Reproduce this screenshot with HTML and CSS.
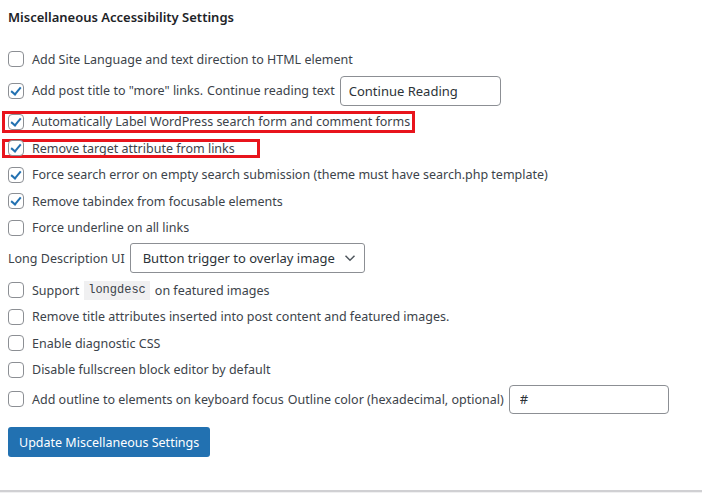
FILE: index.html
```html
<!DOCTYPE html>
<html lang="en">
<head>
  <meta charset="UTF-8">
  <title>Miscellaneous Accessibility Settings</title>
  <link rel="stylesheet" href="styles.css">
</head>
<body>

  <form class="ajuste">
    <h3>Miscellaneous Accessibility Settings</h3>

    <ul>
      <li><label><input type="checkbox"> Add Site Language and text direction to HTML element</label></li>
      <li class="con-campo"><label><input type="checkbox" checked> Add post title to "more" links.</label><label class="sigue">Continue reading text <input type="text" class="campo" value="Continue Reading"></label></li>
      <li><label class="marcado marcado-1"><input type="checkbox" checked> Automatically Label WordPress search form and comment forms</label></li>
      <li><label class="marcado marcado-2"><input type="checkbox" checked> Remove target attribute from links</label></li>
      <li><label><input type="checkbox" checked> Force search error on empty search submission (theme must have search.php template)</label></li>
      <li><label><input type="checkbox" checked> Remove tabindex from focusable elements</label></li>
      <li><label><input type="checkbox"> Force underline on all links</label></li>
      <li class="con-campo con-selector"><label>Long Description UI
        <span class="selector">Button trigger to overlay image
          <svg width="12" height="8" viewBox="0 0 12 8"><path d="M1.5 1.8 6 6.2 10.5 1.8" fill="none" stroke="#50575e" stroke-width="1.5"/></svg>
        </span></label></li>
      <li><label><input type="checkbox"> Support <code>longdesc</code> on featured images</label></li>
      <li><label><input type="checkbox"> Remove title attributes inserted into post content and featured images.</label></li>
      <li><label><input type="checkbox"> Enable diagnostic CSS</label></li>
      <li><label><input type="checkbox"> Disable fullscreen block editor by default</label></li>
      <li class="con-campo ultimo"><label><input type="checkbox"> Add outline to elements on keyboard focus</label><label class="sigue">Outline color (hexadecimal, optional) <input type="text" class="campo campo-color" value="#"></label></li>
    </ul>

    <button type="button">Update Miscellaneous Settings</button>
  </form>

  <hr>
</body>
</html>
```

FILE: styles.css
```css
body {
  font-family: "Noto Sans", "Open Sans", sans-serif;
  font-size: 12.5px;
  margin: 0;
  background-color: #fff;
  color: #3c434a;
}

.ajuste {
  padding: 0 8px;
}

h3 {
  margin: 0;
  padding-top: 8px;
  height: 38px;
  font-size: 13px;
  font-weight: 600;
  color: #1d2327;
}

ul {
  list-style: none;
  margin: 0;
  padding: 0;
}

ul li {
  display: flex;
  align-items: center;
  height: 26.5px;
  white-space: nowrap;
}

ul li.con-campo {
  height: 36px;
}

ul li.con-selector {
  height: 34px;
  margin-bottom: 2px;
}

ul li.ultimo {
  height: 32px;
}

label {
  display: inline-flex;
  align-items: center;
}

.sigue {
  margin-left: 4px;
}

input[type="checkbox"] {
  appearance: none;
  width: 16px;
  height: 16px;
  margin: 0 8px 0 0;
  border: 1px solid #8c8f94;
  border-radius: 4px;
  background: #fff;
  position: relative;
  flex: none;
}

input[type="checkbox"]:checked::before {
  content: "";
  position: absolute;
  left: 4px;
  top: 1px;
  width: 4px;
  height: 8px;
  border: solid #2271b1;
  border-width: 0 2.2px 2.2px 0;
  transform: rotate(40deg);
}

.campo {
  font: inherit;
  font-size: 13px;
  color: #2c3338;
  height: 30px;
  box-sizing: border-box;
  width: 161px;
  margin-left: 5px;
  padding: 0 8px;
  border: 1px solid #8c8f94;
  border-radius: 4px;
}

.campo-color {
  height: 29px;
  width: 160px;
  padding-left: 10px;
}

.selector {
  display: inline-flex;
  align-items: center;
  justify-content: space-between;
  box-sizing: border-box;
  width: 235px;
  height: 30px;
  margin-left: 5px;
  padding: 0 8px 0 12px;
  font-size: 13px;
  color: #2c3338;
  border: 1px solid #8c8f94;
  border-radius: 3px;
}

code {
  font-family: "Liberation Mono", monospace;
  font-size: 12px;
  background: #f0f0f1;
  padding: 2px 4px 3px;
  margin: 0 5px;
  color: #3c434a;
}

.marcado {
  outline: 3px solid #e8141c;
  margin-left: -3px;
  padding: 0 3px;
}

.marcado-1 {
  height: 16px;
  padding-right: 2px;
}

.marcado-2 {
  height: 13px;
  padding-right: 22px;
}

button {
  background-color: #2271b1;
  color: white;
  border: none;
  margin-top: 12px;
  height: 30px;
  padding: 0 11px;
  border-radius: 3px;
  font: inherit;
  font-size: 12.5px;
}

hr {
  margin: 33px 0 0;
  border: none;
  border-top: 2px solid #d0d0d3;
  border-bottom: 1px solid #f0f0f1;
}
```
